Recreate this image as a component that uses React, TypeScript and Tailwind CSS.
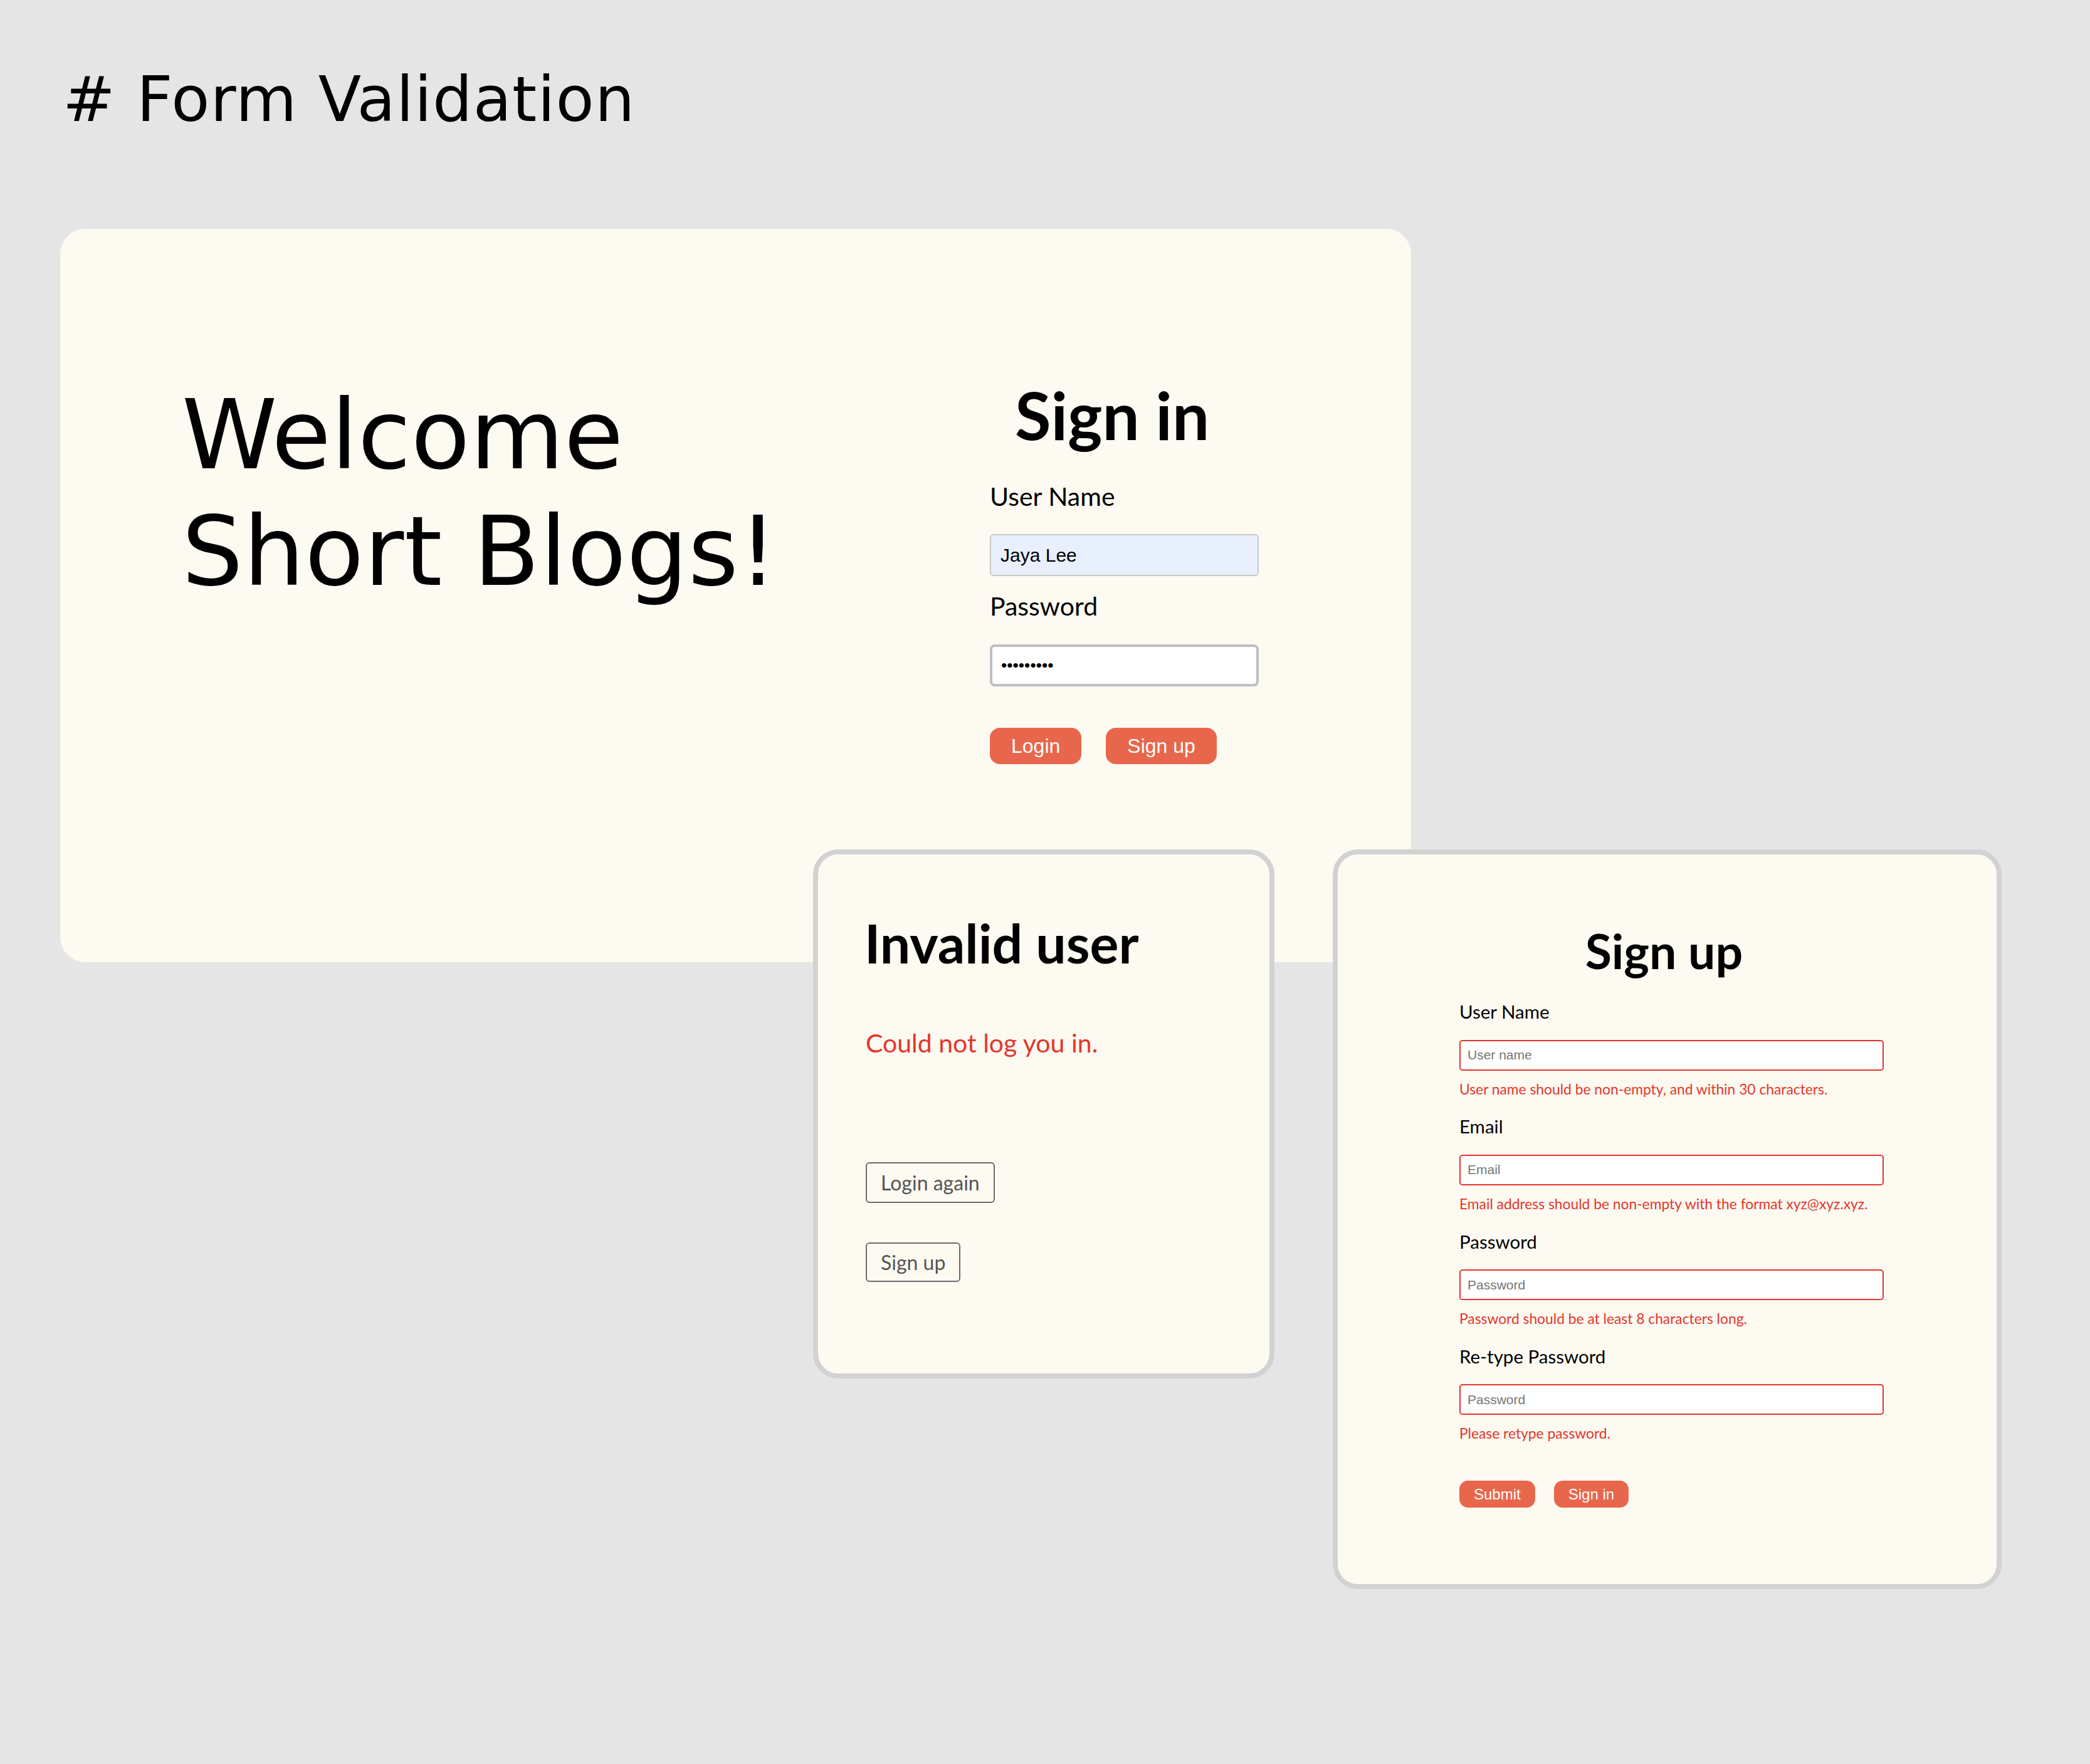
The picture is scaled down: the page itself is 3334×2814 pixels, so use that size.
const dejavu = { fontFamily: '"DejaVu Sans", sans-serif' };

function SignUpField({ label, placeholder, error }: { label: string; placeholder: string; error: string }) {
  return (
    <div className="flex flex-col">
      <label className="text-[29.5px] leading-none text-black">{label}</label>
      <input
        readOnly
        placeholder={placeholder}
        className="mt-[30px] h-[49px] w-full rounded-[5px] border-2 border-[#e5352b] bg-white pl-[11px] font-['Liberation_Sans',sans-serif] text-[21px] text-black outline-none placeholder:text-[#757575]"
      />
      <p className="mt-[18px] text-[22.8px] leading-none text-[#e5352b]">{error}</p>
    </div>
  );
}

export default function App() {
  return (
    <div className="min-h-[2814px] w-full bg-[#e5e5e5] pl-[96px] pt-[109px]">
      <h1 className="ml-1 text-[100px] leading-none tracking-[1.2px] text-black" style={dejavu}>
        # Form Validation
      </h1>

      {/* main sign in panel */}
      <div className="mt-[156px] flex h-[1170px] w-[2155px] rounded-[40px] bg-[#fcfaf1] pl-[194px] pt-[236px]">
        <div className="w-[1289px] text-[154px] leading-[186px] text-black" style={dejavu}>
          <div>Welcome</div>
          <div className="tracking-[0.5px]">Short Blogs!</div>
        </div>

        <div className="flex w-[429px] flex-col pt-[8px] font-['Lato',sans-serif]">
          <h2 className="ml-[40px] text-[105px] font-bold leading-none text-black">Sign in</h2>
          <label className="mt-[57px] text-[41px] leading-none text-black">User Name</label>
          <div className="mt-[40px] flex h-[67px] items-center rounded-[6px] border-2 border-[#c9c9c9] bg-[#e8f0fe] pl-[15px] font-['Liberation_Sans',sans-serif] text-[30px] text-black">
            Jaya Lee
          </div>
          <label className="mt-[27px] text-[41px] leading-none text-black">Password</label>
          <div className="mt-[41px] flex h-[67px] items-center rounded-[8px] border-4 border-[#bebec3] bg-white pl-[14px] font-['Liberation_Sans',sans-serif] text-[26.5px] text-black">
            •••••••••
          </div>
          <div className="mt-[66px] flex gap-[39px] font-['Liberation_Sans',sans-serif] text-[32px] text-white">
            <button className="h-[58px] rounded-[16px] bg-[#e8674c] px-[34px]">Login</button>
            <button className="h-[58px] rounded-[16px] bg-[#e8674c] px-[34px]">Sign up</button>
          </div>
        </div>
      </div>

      <div className="relative -mt-[180px] flex items-start font-['Lato',sans-serif]">
        {/* invalid user dialog */}
        <div className="ml-[1201px] flex h-[844px] w-[736px] flex-col items-start rounded-[40px] border-8 border-[#d2d2d2] bg-[#fcfaf1] pl-[76px] pt-[98px]">
          <h3 className="-ml-[2px] text-[86px] font-bold leading-none text-black">Invalid user</h3>
          <p className="mt-[96px] text-[41px] leading-none text-[#e5352b]">Could not log you in.</p>
          <button className="mt-[170px] h-[65px] rounded-[6px] border-2 border-[#6b6b6b] px-[22px] text-[32px] text-[#555]">
            Login again
          </button>
          <button className="mt-[63px] h-[63px] rounded-[6px] border-2 border-[#6b6b6b] px-[22px] text-[32px] text-[#555]">
            Sign up
          </button>
        </div>

        {/* sign up dialog */}
        <div className="ml-[93px] flex h-[1180px] w-[1067px] flex-col rounded-[40px] border-8 border-[#d2d2d2] bg-[#fcfaf1] pt-[115px]">
          <h3 className="pr-[10px] text-center text-[77px] font-bold leading-none text-black">Sign up</h3>
          <div className="ml-[194px] mt-[44px] flex w-[677px] flex-col gap-[34px]">
            <SignUpField
              label="User Name"
              placeholder="User name"
              error="User name should be non-empty, and within 30 characters."
            />
            <SignUpField
              label="Email"
              placeholder="Email"
              error="Email address should be non-empty with the format xyz@xyz.xyz."
            />
            <SignUpField
              label="Password"
              placeholder="Password"
              error="Password should be at least 8 characters long."
            />
            <SignUpField label="Re-type Password" placeholder="Password" error="Please retype password." />
          </div>
          <div className="ml-[194px] mt-[64px] flex gap-[30px] font-['Liberation_Sans',sans-serif] text-[24px] text-white">
            <button className="h-[43px] rounded-[14px] bg-[#e8674c] px-[23px]">Submit</button>
            <button className="h-[43px] rounded-[14px] bg-[#e8674c] px-[23px]">Sign in</button>
          </div>
        </div>
      </div>
    </div>
  );
}
